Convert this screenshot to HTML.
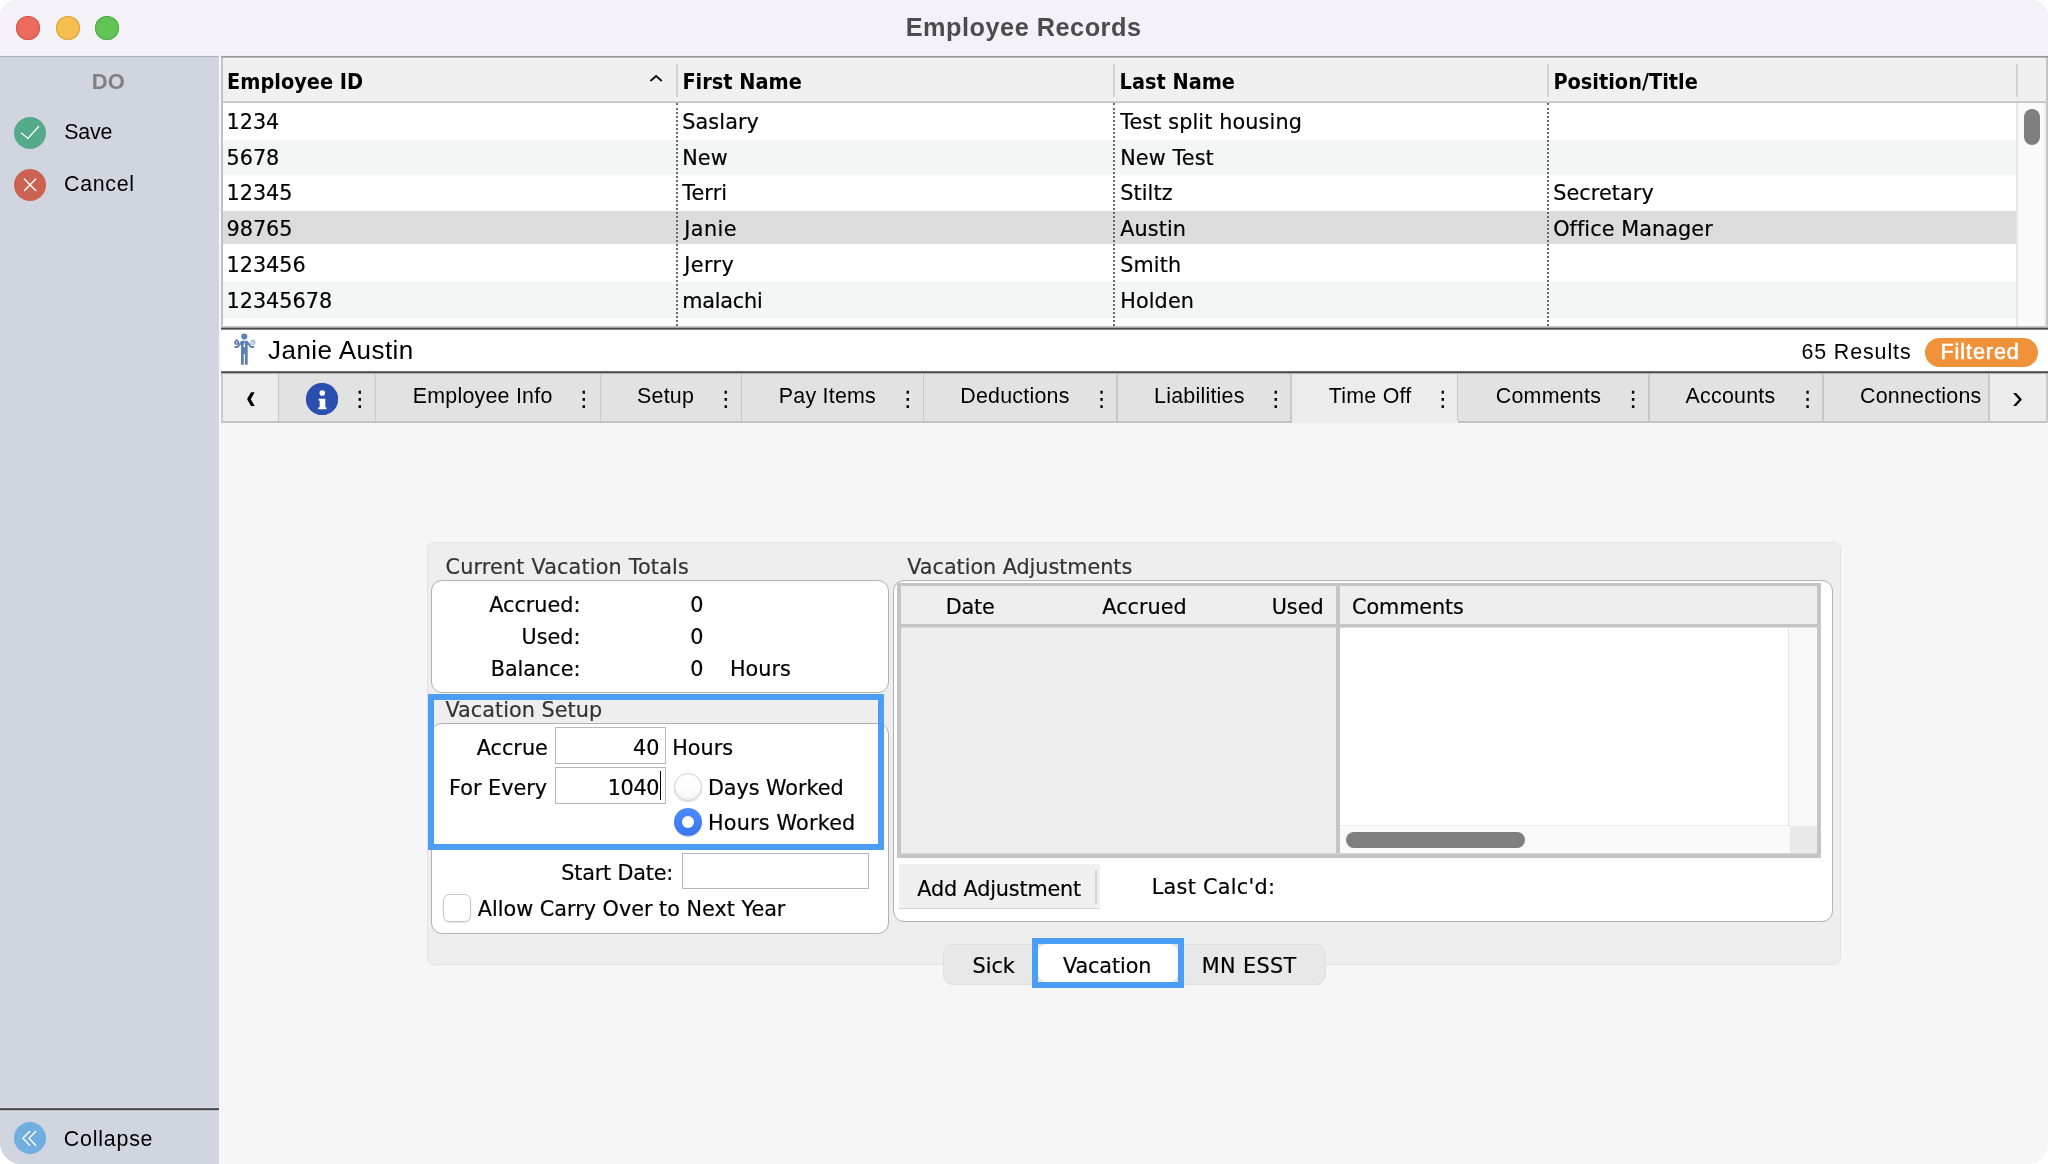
<!DOCTYPE html>
<html lang="en"><head><meta charset="utf-8"><title>Employee Records</title>
<style>
html,body{margin:0;padding:0;background:#fff;}
#w{position:absolute;left:0;top:0;width:2048px;height:1164px;overflow:hidden;border-radius:16px 16px 21px 21px;background:#f6f6f6;will-change:transform;}
.b{position:absolute;}
.t{position:absolute;white-space:pre;line-height:1;}
.d{font-family:"DejaVu Sans", "Liberation Sans", sans-serif;-webkit-text-stroke:0.2px;}
.l{font-family:"Liberation Sans", sans-serif;}
.c{-webkit-text-stroke:0;font-family:"DejaVu Sans Condensed", "DejaVu Sans", sans-serif;}
</style></head>
<body>
<div id="w">
<div class="b" style="left:0px;top:0px;width:2048px;height:56px;background:#f4f1f8;"></div>
<div class="b" style="left:0px;top:55px;width:2048px;height:1px;background:#efecf3;"></div>
<div class="b" style="left:0px;top:56px;width:219px;height:1px;background:#a9b0bc;"></div>
<div class="b" style="left:221px;top:56px;width:1827px;height:1px;background:#9b9b9b;"></div>
<div class="b" style="left:221px;top:57px;width:1827px;height:1px;background:#b2b2b2;"></div>
<div class="b" style="left:16px;top:15.8px;width:24px;height:24px;background:#ec6a5e;border-radius:50%;box-shadow:inset 0 0 0 1px #d5544a;"></div>
<div class="b" style="left:55.8px;top:15.8px;width:24px;height:24px;background:#f4bf4f;border-radius:50%;box-shadow:inset 0 0 0 1px #d9a23c;"></div>
<div class="b" style="left:95px;top:15.8px;width:24px;height:24px;background:#61c554;border-radius:50%;box-shadow:inset 0 0 0 1px #4fa841;"></div>
<div class="t l" style="top:15px;font-size:25.3px;left:723.60px;width:600px;text-align:center;color:#4d4b50;font-weight:700;letter-spacing:0.5px;">Employee Records</div>
<div class="b" style="left:0px;top:57px;width:219px;height:1107px;background:#d1d5df;"></div>
<div class="b" style="left:219px;top:56px;width:2px;height:1108px;background:#f8f8f9;"></div>
<div class="t l" style="top:71px;font-size:22px;left:-191.70px;width:600px;text-align:center;color:#808080;font-weight:700;">DO</div>
<svg class="b" style="left:13.9px;top:116.9px" width="32" height="32" viewBox="0 0 32 32"><circle cx="16" cy="16" r="16" fill="#55aa8a"/><path d="M7.1 15.8 L13.9 21.4 L24.9 9.3" fill="none" stroke="#fff" stroke-width="1.35"/></svg>
<div class="t l" style="top:122px;font-size:21.4px;left:64.20px;letter-spacing:-0.15px;">Save</div>
<svg class="b" style="left:13.9px;top:168.8px" width="32" height="32" viewBox="0 0 32 32"><circle cx="16" cy="16" r="16" fill="#cb6252"/><path d="M10 9.8 L22.1 21.9 M22.1 9.8 L10 21.9" fill="none" stroke="#fff" stroke-width="1.35"/></svg>
<div class="t l" style="top:174px;font-size:21.4px;left:64.00px;letter-spacing:0.7px;">Cancel</div>
<div class="b" style="left:0px;top:1107px;width:219px;height:1px;background:#dcdfe8;"></div>
<div class="b" style="left:0px;top:1108px;width:219px;height:1px;background:#5a5b5e;"></div>
<div class="b" style="left:0px;top:1109px;width:219px;height:1px;background:#4b4b4b;"></div>
<div class="b" style="left:0px;top:1110px;width:219px;height:1px;background:#b4b7bf;"></div>
<div class="b" style="left:0px;top:1111px;width:219px;height:1px;background:#dadde6;"></div>
<svg class="b" style="left:14px;top:1121.8px" width="32" height="32" viewBox="0 0 32 32"><circle cx="16" cy="16" r="16" fill="#6faede"/><path d="M16 9 L8.9 16.3 L16 23.7 M22.1 9 L15 16.3 L22.1 23.7" fill="none" stroke="#fff" stroke-width="1.4"/></svg>
<div class="t l" style="top:1129px;font-size:21.4px;left:63.70px;letter-spacing:0.8px;">Collapse</div>
<div class="b" style="left:221px;top:58px;width:1827px;height:268px;background:#fff;"></div>
<div class="b" style="left:221px;top:58px;width:1827px;height:43px;background:#f0f0f0;"></div>
<div class="b" style="left:223px;top:58px;width:1823px;height:1px;background:#f8f8f8;"></div>
<div class="b" style="left:221px;top:101px;width:1827px;height:1px;background:#cecece;"></div>
<div class="b" style="left:221px;top:102px;width:1827px;height:1px;background:#c6c6c6;"></div>
<div class="b" style="left:223px;top:140px;width:1793px;height:35px;background:#f4f5f5;"></div>
<div class="b" style="left:223px;top:211px;width:1793px;height:33px;background:#dcdcdc;"></div>
<div class="b" style="left:223px;top:282px;width:1793px;height:36px;background:#f4f5f5;"></div>
<div class="b" style="left:2016px;top:103px;width:28px;height:223px;background:#fafafa;border-left:2px solid #e8e8e8;box-sizing:border-box;"></div>
<div class="b" style="left:2044px;top:103px;width:2px;height:223px;background:#f0f0f0;"></div>
<div class="b" style="left:2024px;top:109px;width:16px;height:35.5px;background:#7f7f7f;border-radius:8px;"></div>
<div class="b" style="left:221px;top:58px;width:2px;height:268px;background:#c2c2c2;"></div>
<div class="b" style="left:2046px;top:58px;width:2px;height:268px;background:#c4c4c4;"></div>
<div class="b" style="left:676px;top:64px;width:2px;height:33px;background:#d2d2d2;"></div>
<div class="b" style="left:1113px;top:64px;width:2px;height:33px;background:#d2d2d2;"></div>
<div class="b" style="left:1547px;top:64px;width:2px;height:33px;background:#d2d2d2;"></div>
<div class="b" style="left:2016px;top:64px;width:2px;height:33px;background:#d2d2d2;"></div>
<div class="b" style="left:676px;top:103px;width:0px;height:223px;border-left:2px dotted #6a6a6a;"></div>
<div class="b" style="left:1113px;top:103px;width:0px;height:223px;border-left:2px dotted #6a6a6a;"></div>
<div class="b" style="left:1547px;top:103px;width:0px;height:223px;border-left:2px dotted #6a6a6a;"></div>
<div class="t c" style="top:71px;font-size:21.5px;left:227.10px;font-weight:700;">Employee ID</div>
<div class="t c" style="top:71px;font-size:21.5px;left:682.40px;font-weight:700;">First Name</div>
<div class="t c" style="top:71px;font-size:21.5px;left:1119.60px;font-weight:700;">Last Name</div>
<div class="t c" style="top:71px;font-size:21.5px;left:1553.40px;font-weight:700;">Position/Title</div>
<svg class="b" style="left:647px;top:72px" width="18" height="14" viewBox="0 0 18 14"><path d="M3.4 9 L9.1 4 L14.8 9" fill="none" stroke="#111" stroke-width="1.9"/></svg>
<div class="t d" style="top:112px;font-size:20.75px;left:226.50px;">1234</div>
<div class="t d" style="top:112px;font-size:20.75px;left:682.20px;letter-spacing:0.12px;">Saslary</div>
<div class="t d" style="top:112px;font-size:20.75px;left:1120.20px;letter-spacing:0.12px;">Test split housing</div>
<div class="t d" style="top:148px;font-size:20.75px;left:226.50px;">5678</div>
<div class="t d" style="top:148px;font-size:20.75px;left:682.20px;letter-spacing:0.12px;">New</div>
<div class="t d" style="top:148px;font-size:20.75px;left:1120.20px;letter-spacing:0.12px;">New Test</div>
<div class="t d" style="top:183px;font-size:20.75px;left:226.50px;">12345</div>
<div class="t d" style="top:183px;font-size:20.75px;left:682.20px;letter-spacing:0.12px;">Terri</div>
<div class="t d" style="top:183px;font-size:20.75px;left:1120.20px;letter-spacing:0.12px;">Stiltz</div>
<div class="t d" style="top:183px;font-size:20.75px;left:1553.20px;letter-spacing:0.08px;">Secretary</div>
<div class="t d" style="top:219px;font-size:20.75px;left:226.50px;">98765</div>
<div class="t d" style="top:219px;font-size:20.75px;left:684.20px;letter-spacing:0.45px;">Janie</div>
<div class="t d" style="top:219px;font-size:20.75px;left:1120.20px;letter-spacing:0.12px;">Austin</div>
<div class="t d" style="top:219px;font-size:20.75px;left:1553.20px;letter-spacing:0.08px;">Office Manager</div>
<div class="t d" style="top:255px;font-size:20.75px;left:226.50px;">123456</div>
<div class="t d" style="top:255px;font-size:20.75px;left:684.20px;letter-spacing:0.45px;">Jerry</div>
<div class="t d" style="top:255px;font-size:20.75px;left:1120.20px;letter-spacing:0.12px;">Smith</div>
<div class="t d" style="top:291px;font-size:20.75px;left:226.50px;">12345678</div>
<div class="t d" style="top:291px;font-size:20.75px;left:682.20px;letter-spacing:-0.2px;">malachi</div>
<div class="t d" style="top:291px;font-size:20.75px;left:1120.20px;letter-spacing:0.12px;">Holden</div>
<div class="b" style="left:221px;top:326px;width:1827px;height:1px;background:#c8c8c8;"></div>
<div class="b" style="left:221px;top:327px;width:1827px;height:1px;background:#a4a4a4;"></div>
<div class="b" style="left:221px;top:328px;width:1827px;height:1px;background:#4a4a4a;"></div>
<div class="b" style="left:221px;top:329px;width:1827px;height:1px;background:#8a8a8a;"></div>
<div class="b" style="left:221px;top:330px;width:1827px;height:41px;background:#fff;"></div>
<div class="b" style="left:221px;top:371px;width:1827px;height:1px;background:#6c6c6c;"></div>
<div class="b" style="left:221px;top:372px;width:1827px;height:1px;background:#4e4e4e;"></div>
<div class="b" style="left:221px;top:373px;width:1827px;height:1px;background:#b2b2b2;"></div>
<div class="t l" style="top:337px;font-size:26px;left:268.10px;letter-spacing:0.45px;">Janie Austin</div>
<div class="t l" style="top:342px;font-size:21.4px;left:1801.45px;letter-spacing:0.9px;">65 Results</div>
<div class="b" style="left:1924.75px;top:338px;width:113px;height:29px;background:#f0923a;border-radius:14.5px;"></div>
<div class="t l" style="top:341px;font-size:21.6px;left:1940.50px;color:#fff;letter-spacing:0.9px;-webkit-text-stroke:0.55px #fff;">Filtered</div>
<svg class="b" style="left:232px;top:333px" width="26" height="34" viewBox="0 0 26 34">
<g fill="#5d80b4"><circle cx="12.3" cy="3.6" r="3.05"/><path d="M9 8.2 Q9 7.8 9.6 7.8 H15.1 Q15.7 7.8 15.7 8.2 L19.6 12.9 H22.2 V14.9 H18.8 L15.7 11.6 V31.8 H12.9 V21 H11.8 V31.8 H9 V11.6 L5.9 14.9 H2.6 V12.9 H5.2 Z"/><circle cx="4.7" cy="9.4" r="2.5"/><path d="M3.6 6.2 L5.8 6.2 L5.2 7.2 L4.2 7.2Z"/></g>
<circle cx="20.9" cy="9.3" r="2.2" fill="#eef2f8" stroke="#7d9ac6" stroke-width="0.9"/><path d="M20.9 8 V9.5 H21.9" fill="none" stroke="#7d9ac6" stroke-width="0.6"/>
<path d="M12.35 8 L11.6 13.2 L12.35 14.6 L13.1 13.2Z" fill="#fff"/><circle cx="4.7" cy="9.6" r="0.8" fill="#e6ecf5"/></svg>
<div class="b" style="left:221.3px;top:373.6px;width:1826.7px;height:47.6px;background:#e2e2e2;"></div>
<div class="b" style="left:221.3px;top:421.2px;width:1826.7px;height:1.6px;background:#c2c2c2;"></div>
<div class="b" style="left:1291.5px;top:373.6px;width:166.5px;height:49.4px;background:#ececec;"></div>
<div class="b" style="left:1989px;top:373.6px;width:57px;height:47.6px;background:#ececec;"></div>
<div class="b" style="left:222.7px;top:373.6px;width:56px;height:47.6px;background:#ececec;"></div>
<div class="b" style="left:277.8px;top:373.6px;width:1.4px;height:47.6px;background:#c8c8c8;"></div>
<div class="b" style="left:374.8px;top:373.6px;width:1.4px;height:47.6px;background:#c8c8c8;"></div>
<div class="b" style="left:599.8px;top:373.6px;width:1.4px;height:47.6px;background:#c8c8c8;"></div>
<div class="b" style="left:740.55px;top:373.6px;width:1.4px;height:47.6px;background:#c8c8c8;"></div>
<div class="b" style="left:922.55px;top:373.6px;width:1.4px;height:47.6px;background:#c8c8c8;"></div>
<div class="b" style="left:1116.3px;top:373.6px;width:1.4px;height:47.6px;background:#c8c8c8;"></div>
<div class="b" style="left:1290.3px;top:373.6px;width:1.4px;height:47.6px;background:#c8c8c8;"></div>
<div class="b" style="left:1456.8999999999999px;top:373.6px;width:1.4px;height:47.6px;background:#c8c8c8;"></div>
<div class="b" style="left:1648.3px;top:373.6px;width:1.4px;height:47.6px;background:#c8c8c8;"></div>
<div class="b" style="left:1822.3px;top:373.6px;width:1.4px;height:47.6px;background:#c8c8c8;"></div>
<div class="b" style="left:1988.3px;top:373.6px;width:1.4px;height:47.6px;background:#c8c8c8;"></div>
<div class="b" style="left:221.3px;top:373.6px;width:1.4px;height:49px;background:#c8c8c8;"></div>
<div class="b" style="left:2046px;top:373.6px;width:2px;height:49px;background:#c8c8c8;"></div>
<div class="t l" style="top:386px;font-size:21.4px;left:412.70px;letter-spacing:0.24px;">Employee Info</div>
<div class="t d" style="left:573.1px;top:388px;font-size:21.3px;">⋮</div>
<div class="t l" style="top:386px;font-size:21.4px;left:637.00px;letter-spacing:0.24px;">Setup</div>
<div class="t d" style="left:715.1px;top:388px;font-size:21.3px;">⋮</div>
<div class="t l" style="top:386px;font-size:21.4px;left:778.75px;letter-spacing:0.24px;">Pay Items</div>
<div class="t d" style="left:896.9px;top:388px;font-size:21.3px;">⋮</div>
<div class="t l" style="top:386px;font-size:21.4px;left:960.25px;letter-spacing:0.24px;">Deductions</div>
<div class="t d" style="left:1090.7px;top:388px;font-size:21.3px;">⋮</div>
<div class="t l" style="top:386px;font-size:21.4px;left:1154.00px;letter-spacing:0.24px;">Liabilities</div>
<div class="t d" style="left:1264.9px;top:388px;font-size:21.3px;">⋮</div>
<div class="t l" style="top:386px;font-size:21.4px;left:1328.75px;letter-spacing:0.24px;">Time Off</div>
<div class="t d" style="left:1431.9px;top:388px;font-size:21.3px;">⋮</div>
<div class="t l" style="top:386px;font-size:21.4px;left:1495.75px;letter-spacing:0.24px;">Comments</div>
<div class="t d" style="left:1622.2px;top:388px;font-size:21.3px;">⋮</div>
<div class="t l" style="top:386px;font-size:21.4px;left:1685.50px;letter-spacing:0.24px;">Accounts</div>
<div class="t d" style="left:1796.7px;top:388px;font-size:21.3px;">⋮</div>
<div class="t l" style="top:386px;font-size:21.4px;left:1860.00px;letter-spacing:0.24px;">Connections</div>
<div class="t d" style="left:348.9px;top:388px;font-size:21.3px;">⋮</div>
<div class="t l" style="left:246px;top:378px;font-size:35px;font-weight:700;transform:scaleX(.84);transform-origin:0 0;">‹</div>
<div class="t l" style="left:2012px;top:380px;font-size:33px;">›</div>
<svg class="b" style="left:306px;top:382.6px" width="32.2" height="32.2" viewBox="0 0 32 32"><circle cx="16" cy="16" r="16.1" fill="#2a4fae"/><circle cx="16.2" cy="9.9" r="2.8" fill="#fff"/><path d="M12.5 15.6h6.7v8.3l1.2 0.6v1.5h-8.3v-1.5l1.5-0.6v-6.6h-1.1z" fill="#fff"/></svg>
<div class="b" style="left:221.3px;top:422.8px;width:1826.7px;height:741.2px;background:#f6f6f6;"></div>
<div class="b" style="left:1291.7px;top:420px;width:165.2px;height:3px;background:#ececec;"></div>
<div class="b" style="left:427px;top:542px;width:1414px;height:423px;background:#eeeeee;border:1px solid #e4e4e4;border-radius:7px;box-sizing:border-box;"></div>
<div class="t d" style="top:557px;font-size:20.75px;left:445.50px;color:#333;letter-spacing:0.17px;">Current Vacation Totals</div>
<div class="t d" style="top:557px;font-size:20.75px;left:907.30px;color:#333;letter-spacing:-0.04px;">Vacation Adjustments</div>
<div class="b" style="left:431px;top:580px;width:458px;height:113px;background:#fff;border:1.2px solid #b2b2b2;border-radius:11px;box-sizing:border-box;"></div>
<div class="b" style="left:431px;top:723px;width:458px;height:211px;background:#fff;border:1.2px solid #b2b2b2;border-radius:11px;box-sizing:border-box;"></div>
<div class="b" style="left:893px;top:580px;width:940px;height:342px;background:#fff;border:1.2px solid #b2b2b2;border-radius:11px;box-sizing:border-box;"></div>
<div class="t d" style="top:595px;font-size:20.75px;right:1467.60px;">Accrued:</div>
<div class="t d" style="top:627px;font-size:20.75px;right:1467.60px;">Used:</div>
<div class="t d" style="top:659px;font-size:20.75px;right:1467.60px;">Balance:</div>
<div class="t d" style="top:595px;font-size:20.75px;left:690.25px;">0</div>
<div class="t d" style="top:627px;font-size:20.75px;left:690.25px;">0</div>
<div class="t d" style="top:659px;font-size:20.75px;left:690.25px;">0</div>
<div class="t d" style="top:659px;font-size:20.75px;left:729.95px;">Hours</div>
<div class="b" style="left:434px;top:700px;width:444px;height:23.2px;background:#eeeeee;"></div>
<div class="b" style="left:428px;top:694px;width:456px;height:156px;border:6px solid #4a9ef5;box-sizing:border-box;"></div>
<div class="t d" style="top:700px;font-size:20.75px;left:445.50px;color:#333;letter-spacing:0.03px;">Vacation Setup</div>
<div class="b" style="left:555px;top:727px;width:111px;height:37px;background:#fff;border:1.3px solid #b6b6b6;box-sizing:border-box;"></div>
<div class="b" style="left:555px;top:767px;width:111px;height:37px;background:#fff;border:1.3px solid #b6b6b6;box-sizing:border-box;"></div>
<div class="t d" style="top:738px;font-size:20.75px;right:1500.20px;">Accrue</div>
<div class="t d" style="top:778px;font-size:20.75px;right:1500.95px;">For Every</div>
<div class="t d" style="top:738px;font-size:20.75px;right:1388.50px;">40</div>
<div class="t d" style="top:778px;font-size:20.75px;right:1388.90px;letter-spacing:-0.35px;">1040</div>
<div class="b" style="left:660px;top:771.2px;width:1.4px;height:29px;background:#000;"></div>
<div class="t d" style="top:738px;font-size:20.75px;left:672.20px;">Hours</div>
<div class="b" style="left:674px;top:773px;width:28px;height:28px;background:#fff;border-radius:50%;background:linear-gradient(#fff 55%,#f2f2f2);border:1.2px solid #cdcdcd;box-sizing:border-box;box-shadow:0 1px 1.5px rgba(0,0,0,.15);"></div>
<div class="b" style="left:674px;top:808px;width:28px;height:28px;background:#3b7df6;border-radius:50%;background:linear-gradient(#4b8cf8,#3b74f3);box-shadow:0 1px 1.5px rgba(0,0,0,.2);"></div>
<div class="b" style="left:682px;top:816px;width:12px;height:12px;background:#fff;border-radius:50%;"></div>
<div class="t d" style="top:778px;font-size:20.75px;left:707.95px;letter-spacing:-0.05px;">Days Worked</div>
<div class="t d" style="top:813px;font-size:20.75px;left:707.95px;letter-spacing:0.2px;">Hours Worked</div>
<div class="t d" style="top:863px;font-size:20.75px;right:1375.00px;letter-spacing:-0.2px;">Start Date:</div>
<div class="b" style="left:682px;top:852.5px;width:186.75px;height:36.75px;background:#fff;border:1.3px solid #b6b6b6;box-sizing:border-box;"></div>
<div class="b" style="left:443.25px;top:894.25px;width:27.5px;height:27.5px;background:#fff;border-radius:6.5px;border:1.2px solid #c8c8c8;box-sizing:border-box;box-shadow:0 1px 1.5px rgba(0,0,0,.12);"></div>
<div class="t d" style="top:899px;font-size:20.75px;left:477.85px;">Allow Carry Over to Next Year</div>
<div class="b" style="left:897px;top:583px;width:924px;height:275px;background:#c5c5c5;"></div>
<div class="b" style="left:901px;top:586px;width:435px;height:38px;background:#eeeeee;"></div>
<div class="b" style="left:1340px;top:586px;width:477px;height:38px;background:#eeeeee;"></div>
<div class="b" style="left:901px;top:627px;width:435px;height:227px;background:#eeeeee;"></div>
<div class="b" style="left:1340px;top:627px;width:477px;height:227px;background:#fff;"></div>
<div class="b" style="left:901px;top:627px;width:435px;height:1px;background:#dadada;"></div>
<div class="b" style="left:1340px;top:627px;width:477px;height:1px;background:#dedede;"></div>
<div class="b" style="left:1788px;top:628px;width:29px;height:198px;background:#f8f8f8;border-left:1.3px solid #e8e8e8;box-sizing:border-box;"></div>
<div class="b" style="left:1340px;top:825px;width:450px;height:29px;background:#fafafa;border-top:1.3px solid #e8e8e8;box-sizing:border-box;"></div>
<div class="b" style="left:1790px;top:826px;width:27px;height:28px;background:#e9e9e9;"></div>
<div class="b" style="left:901px;top:853px;width:916px;height:1px;background:#d6d6d6;"></div>
<div class="b" style="left:1346.25px;top:832px;width:178.75px;height:16px;background:#7f7f7f;border-radius:8px;"></div>
<div class="t d" style="top:597px;font-size:20.75px;left:945.80px;letter-spacing:-0.25px;">Date</div>
<div class="t d" style="top:597px;font-size:20.75px;left:1102.30px;">Accrued</div>
<div class="t d" style="top:597px;font-size:20.75px;left:1271.65px;">Used</div>
<div class="t d" style="top:597px;font-size:20.75px;left:1352.10px;letter-spacing:-0.1px;">Comments</div>
<div class="b" style="left:898.75px;top:864.25px;width:200.75px;height:45px;background:#f0f0f0;border-bottom:1.7px solid #d2d2d2;box-sizing:border-box;"></div>
<div class="b" style="left:1095.4px;top:870px;width:1.6px;height:33.75px;background:#d2d2d2;"></div>
<div class="t d" style="top:879px;font-size:20.75px;left:917.30px;letter-spacing:-0.15px;">Add Adjustment</div>
<div class="t d" style="top:877px;font-size:20.75px;left:1151.70px;letter-spacing:0.3px;">Last Calc&#39;d:</div>
<div class="b" style="left:942.5px;top:943.75px;width:383.25px;height:40.75px;background:#e8e8e8;border:1px solid #dedede;border-radius:10px;box-sizing:border-box;"></div>
<div class="b" style="left:1038px;top:944.25px;width:140px;height:37.5px;background:#fff;border-radius:9px;"></div>
<div class="b" style="left:1032px;top:938px;width:152px;height:50px;border:6px solid #4a9ef5;box-sizing:border-box;"></div>
<div class="t d" style="top:956px;font-size:20.75px;left:972.50px;">Sick</div>
<div class="t d" style="top:956px;font-size:20.75px;left:1062.95px;letter-spacing:-0.1px;">Vacation</div>
<div class="t d" style="top:956px;font-size:20.75px;left:1201.70px;letter-spacing:0.4px;">MN ESST</div>
</div>
</body></html>
